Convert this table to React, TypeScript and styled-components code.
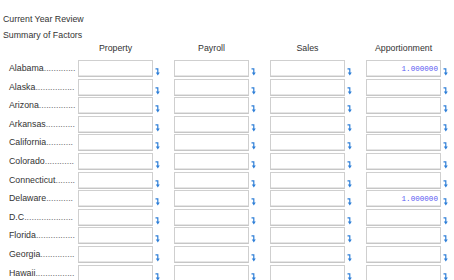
import React from "react";
import styled, { createGlobalStyle } from "styled-components";

const Global = createGlobalStyle`
  html, body { margin: 0; padding: 0; background: #fff; }
  body { font-family: "Liberation Sans", Arial, sans-serif; color: #333; }
`;

const Page = styled.div`
  padding: 13px 0 0 3px;
  font-size: 8.8px;
  height: 267px;
  overflow: hidden;
`;

const Title = styled.div`
  line-height: 12px;
  height: 12px;
  margin-bottom: 4px;
`;

const Sub = styled.div`
  line-height: 12px;
  height: 12px;
  margin-bottom: 1px;
`;

const Grid = styled.div`
  display: grid;
  grid-template-columns: 69px repeat(4, 96px);
  grid-auto-rows: 17px;
  row-gap: 1.6px;
  margin-left: 6px;
`;

const HeaderRow = styled.div`
  display: grid;
  grid-template-columns: 69px repeat(4, 96px);
  margin-left: 6px;
  height: 18px;
  line-height: 12px;
`;

const HeadCell = styled.div`
  width: 75px;
  text-align: center;
  white-space: nowrap;
`;

const Label = styled.div`
  line-height: 17px;
  white-space: nowrap;
`;

const Dots = styled.span`
  color: #6f6f6f;
`;

const Cell = styled.div`
  display: flex;
  align-items: flex-end;
  gap: 2px;
`;

const Field = styled.input`
  box-sizing: border-box;
  width: 75px;
  height: 17px;
  margin: 0;
  padding: 0 2px 0 2px;
  border: 1px solid #cfcfcf;
  border-bottom-color: #c6c6c6;
  box-shadow: inset 0 -1px 0 #e6e6e6;
  background: #fff;
  font-family: "Liberation Mono", "Courier New", monospace;
  font-size: 7.6px;
  color: #5a5af2;
  text-align: right;
  outline: none;
`;

const Arrow = styled.svg`
  width: 5px;
  height: 8px;
  margin-bottom: 1px;
  flex: none;
`;

const FillArrow = () => (
  <Arrow viewBox="0 0 5 8">
    <path d="M0.5 0.8 H2.8 V5.5" stroke="#2f7fd8" strokeWidth="1.2" fill="none" />
    <path d="M0.8 4.6 L4.8 4.6 L2.8 7.6 Z" fill="#2f7fd8" />
  </Arrow>
);

const states: [string, number][] = [
  ["Alabama", 13],
  ["Alaska", 16],
  ["Arizona", 15],
  ["Arkansas", 12],
  ["California", 11],
  ["Colorado", 12],
  ["Connecticut", 8],
  ["Delaware", 11],
  ["D.C", 20],
  ["Florida", 16],
  ["Georgia", 14],
  ["Hawaii", 16],
];

const withValue = new Set(["Alabama", "Delaware"]);

export default function App() {
  return (
    <>
      <Global />
      <Page>
        <Title>Current Year Review</Title>
        <Sub>Summary of Factors</Sub>
        <HeaderRow>
          <div />
          <HeadCell>Property</HeadCell>
          <HeadCell>Payroll</HeadCell>
          <HeadCell>Sales</HeadCell>
          <HeadCell>Apportionment</HeadCell>
        </HeaderRow>
        <Grid>
          {states.map(([s, n]) => (
            <React.Fragment key={s}>
              <Label>
                {s}
                <Dots>{".".repeat(n)}</Dots>
              </Label>
              {[0, 1, 2, 3].map((c) => (
                <Cell key={c}>
                  <Field
                    readOnly
                    value={c === 3 && withValue.has(s) ? "1.000000" : ""}
                  />
                  <FillArrow />
                </Cell>
              ))}
            </React.Fragment>
          ))}
        </Grid>
      </Page>
    </>
  );
}
